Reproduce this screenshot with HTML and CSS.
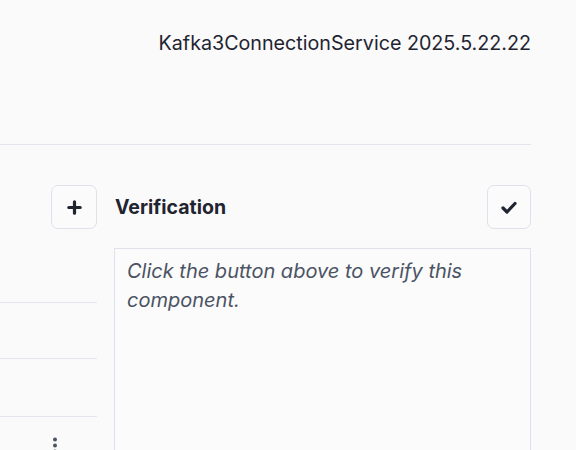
FILE: index.html
```html
<!DOCTYPE html>
<html lang="en">
<head>
<meta charset="utf-8">
<title>Kafka3ConnectionService</title>
<link rel="stylesheet" href="styles.css">
</head>
<body>
<div class="page">
  <header class="top">
    <span class="title">Kafka3ConnectionService 2025.5.22.22</span>
  </header>
  <main class="main">
    <aside class="side">
      <button class="btn add" type="button" aria-label="Add">
        <svg width="15" height="15" viewBox="0 0 15 15"><path d="M7.5 1.8v11.4M1.8 7.5h11.4" stroke="#1f2430" stroke-width="3.2" stroke-linecap="round"/></svg>
      </button>
      <ul class="rows">
        <li class="row r1"></li>
        <li class="row r2"></li>
        <li class="row r3"></li>
        <li class="row more">
          <svg width="6" height="20" viewBox="0 0 6 20"><circle cx="3" cy="2.5" r="2" fill="#4b5363"/><circle cx="3" cy="8.5" r="2" fill="#4b5363"/><circle cx="3" cy="14.5" r="2" fill="#4b5363"/></svg>
        </li>
      </ul>
    </aside>
    <section class="verify">
      <div class="verify-head">
        <h2 class="verify-title">Verification</h2>
        <button class="btn check" type="button" aria-label="Verify">
          <svg width="16" height="13" viewBox="0 0 16 13"><path d="M2 7l4 4 8-8.5" fill="none" stroke="#1f2430" stroke-width="3.2" stroke-linecap="round" stroke-linejoin="round"/></svg>
        </button>
      </div>
      <textarea class="result" readonly placeholder="Click the button above to verify this component."></textarea>
    </section>
  </main>
</div>
</body>
</html>
```
FILE: styles.css
```css
* { box-sizing: border-box; }
html, body {
  margin: 0;
  padding: 0;
  background: #fafafb;
  font-family: Inter, "Liberation Sans", sans-serif;
  color: #1f2430;
  overflow: hidden;
}
.page {
  width: 576px;
  height: 450px;
  padding-right: 45px;
  overflow: hidden;
}
.top {
  height: 145px;
  display: flex;
  justify-content: flex-end;
  align-items: flex-start;
  padding-top: 30px;
  border-bottom: 1px solid #e3e6ee;
}
.title {
  font-size: 19.7px;
  line-height: 26px;
  color: #1f2430;
}
.main {
  display: flex;
  gap: 17px;
  padding-top: 40px;
}
.side {
  width: 97px;
  flex: none;
  display: flex;
  flex-direction: column;
  align-items: flex-end;
}
.btn {
  display: flex;
  align-items: center;
  justify-content: center;
  height: 44px;
  padding: 0;
  background: #fbfbfc;
  border: 1px solid #dfe2ea;
  border-radius: 7px;
}
.add { width: 46px; }
.check { width: 44px; }
.rows {
  list-style: none;
  margin: 17px 0 0;
  padding: 0;
  width: 100%;
}
.row {
  border-bottom: 1.5px solid #e4e6ed;
}
.r1 { height: 57px; }
.r2 { height: 56px; }
.r3 { height: 58px; }
.row.more {
  border-bottom: none;
  padding-top: 20px;
  padding-left: 52px;
  height: 40px;
}
.verify {
  flex: 1;
  display: flex;
  flex-direction: column;
}
.verify-head {
  display: flex;
  align-items: center;
  justify-content: space-between;
  height: 44px;
}
.verify-title {
  margin: 0;
  padding-left: 1px;
  font-size: 19.5px;
  line-height: 26px;
  font-weight: 700;
  color: #1f2430;
}
.result {
  margin-top: 19px;
  height: 260px;
  flex: none;
  width: 100%;
  resize: none;
  background: #fbfbfc;
  border: 1px solid #dfe2ea;
  border-radius: 0;
  padding: 8px 12px;
  font-family: Inter, "Liberation Sans", sans-serif;
  font-size: 20px;
  line-height: 29px;
  font-style: italic;
  color: #4b5363;
  outline: none;
}
.result::placeholder {
  color: #4b5363;
  opacity: 1;
  font-style: italic;
}
```
